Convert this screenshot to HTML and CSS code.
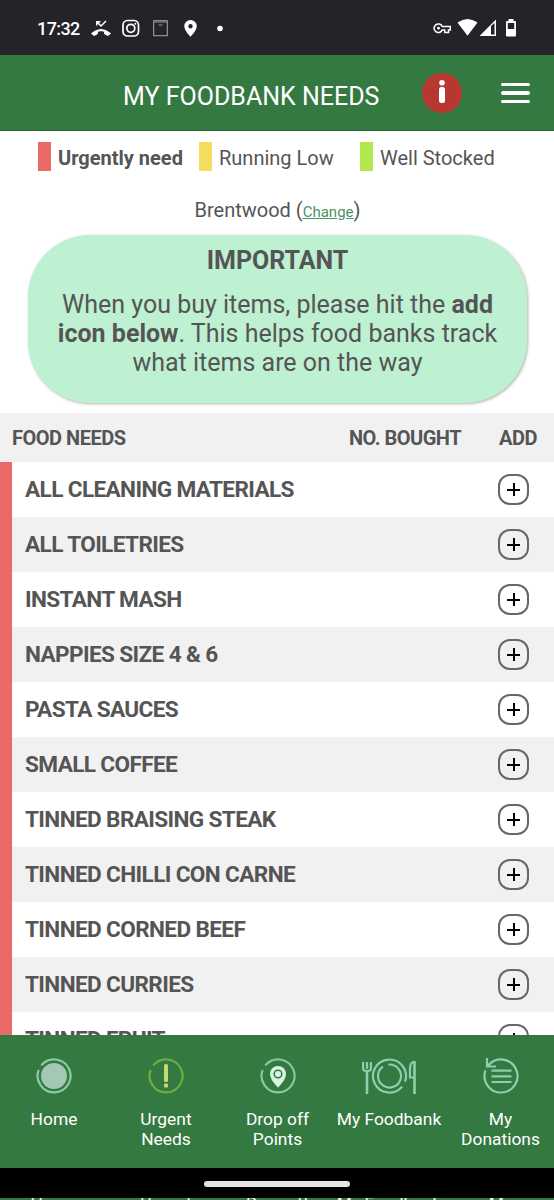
FILE: index.html
```
<!DOCTYPE html>
<html lang="en">
<head>
    <meta charset="UTF-8">
    <meta name="viewport" content="width=device-width, initial-scale=1.0">
    <title>My Foodbank Needs</title>
    <link rel="stylesheet" href="styles.css">
</head>
<body>
    <div class="screen">
        <div class="status-bar">
            <span class="clock">17:32</span>
            <svg class="status-left" width="140" height="24" viewBox="90 16 140 24" fill="none">
                <path d="M91.500 33.500Q101 25.500 110.500 33.500L107.800 35.500L104.600 33.800V31.300Q101 30 97.400 31.300V33.800L94.200 35.500Z" fill="#fff" stroke="#fff" stroke-linejoin="round"/>
                <path d="M96.800 25.500V21.800H100.500M97 22L101 26L106 21" stroke="#fff" stroke-width="1.500"/>
                <rect x="123" y="20.500" width="15.500" height="15.500" rx="4.500" stroke="#fff" stroke-width="1.700"/>
                <circle cx="130.800" cy="28.300" r="4" stroke="#fff" stroke-width="1.700"/>
                <circle cx="135.400" cy="23.800" r="1" fill="#fff"/>
                <rect x="153.700" y="20.700" width="13.600" height="15" stroke="#aaa"/>
                <path d="M154 22H167" stroke="#777" stroke-width="1.500"/>
                <path d="M158.500 25H162.500" stroke="#999"/>
                <path d="M190.500 20a6.200 6.200 0 0 0-6.200 6.200c0 4.400 6.200 10.500 6.200 10.500s6.200-6.100 6.200-10.500a6.200 6.200 0 0 0-6.200-6.200zm0 4a2.200 2.200 0 1 1 0 4.400a2.200 2.200 0 0 1 0-4.400z" fill="#fff" fill-rule="evenodd"/>
                <circle cx="220" cy="28.500" r="2.800" fill="#fff"/>
            </svg>
            <svg class="status-right" width="86" height="24" viewBox="432 16 86 24" fill="none">
                <path d="M442.300 26.600A4.300 4.300 0 1 0 442.300 29.900H444.800V32.400H448.500V29.900H450.300V26.600Z" stroke="#fff" stroke-width="1.500"/>
                <circle cx="438.500" cy="28.200" r="1.400" fill="#fff"/>
                <path d="M457.500 22.500Q467.500 15.500 477.500 22.500L467.500 35.800Z" fill="#fff"/>
                <path d="M479.500 36L496 19.500V36ZM491 26V34.500H494.500V23Z" fill="#fff" fill-rule="evenodd"/>
                <path d="M508.500 19H513.500V21H515Q516 21 516 22V35.500Q516 36.500 515 36.500H507Q506 36.500 506 35.500V22Q506 21 507 21H508.500ZM507.800 23V29H514.200V23Z" fill="#fff" fill-rule="evenodd"/>
            </svg>
        </div>

        <header class="app-header">
            <h1>MY FOODBANK NEEDS</h1>
            <svg class="info" width="40" height="40" viewBox="0 0 40 40">
                <circle cx="20" cy="20" r="20" fill="#b93731"/>
                <circle cx="20" cy="9.800" r="2.800" fill="#fff"/>
                <rect x="17" y="14" width="6" height="16" rx="2.500" fill="#fff"/>
            </svg>
            <div class="burger"><i></i><i></i><i></i></div>
        </header>

        <div class="legend">
            <div class="key urgent">Urgently need</div>
            <div class="key low">Running Low</div>
            <div class="key stocked">Well Stocked</div>
        </div>
        <p class="location">Brentwood (<a href="#">Change</a>)</p>

        <div class="notice">
            <h2>IMPORTANT</h2>
            <p>When you buy items, please hit the <b>add<br>icon below</b>. This helps food banks track<br>what items are on the way</p>
        </div>

        <div class="table-head">
            <span>FOOD NEEDS</span>
            <span class="bought">NO. BOUGHT</span>
            <span>ADD</span>
        </div>
        <ul class="needs">
            <li><span>ALL CLEANING MATERIALS</span><button class="add"></button></li>
            <li><span>ALL TOILETRIES</span><button class="add"></button></li>
            <li><span>INSTANT MASH</span><button class="add"></button></li>
            <li><span>NAPPIES SIZE 4 &amp; 6</span><button class="add"></button></li>
            <li><span>PASTA SAUCES</span><button class="add"></button></li>
            <li><span>SMALL COFFEE</span><button class="add"></button></li>
            <li><span>TINNED BRAISING STEAK</span><button class="add"></button></li>
            <li><span>TINNED CHILLI CON CARNE</span><button class="add"></button></li>
            <li><span>TINNED CORNED BEEF</span><button class="add"></button></li>
            <li><span>TINNED CURRIES</span><button class="add"></button></li>
            <li><span>TINNED FRUIT</span><button class="add"></button></li>
        </ul>

        <nav class="tabs">
            <a href="#">
                <svg width="36" height="36" viewBox="0 0 36 36" fill="none">
                    <path d="M5.300 7.400A16.500 16.500 0 1 1 2.700 11.820" stroke="#8acda3" stroke-width="2.200"/>
                    <circle cx="18" cy="18" r="13" fill="#a3c9b4"/>
                </svg>
                Home
            </a>
            <a href="#">
                <svg width="36" height="36" viewBox="0 0 36 36" fill="none">
                    <path d="M5.300 7.400A16.500 16.500 0 1 1 2.700 11.820" stroke="#70ad3e" stroke-width="2.200"/>
                    <rect x="16" y="6" width="4" height="18" rx="1.500" fill="#c6da70"/>
                    <circle cx="18" cy="27.500" r="2.200" fill="#c6da70"/>
                </svg>
                Urgent<br>Needs
            </a>
            <a href="#">
                <svg width="36" height="36" viewBox="0 0 36 36" fill="none">
                    <path d="M5.300 7.400A16.500 16.500 0 1 1 2.700 11.820" stroke="#8ac7a0" stroke-width="2.200"/>
                    <path d="M18 8a8 8 0 0 0-8 8c0 6 8 13.500 8 13.500s8-7.500 8-13.500a8 8 0 0 0-8-8z" fill="#d5f5de"/>
                    <circle cx="18" cy="16" r="3.800" stroke="#347941" stroke-width="1.500"/>
                </svg>
                Drop off<br>Points
            </a>
            <a href="#">
                <svg width="54" height="36" viewBox="0 0 54 36" fill="none" stroke="#91cdab" stroke-width="2.200">
                    <path d="M1.100 4V10Q1.100 13 4 13H6Q8.900 13 8.900 10V4M5 4V11"/>
                    <path d="M5 13V36" stroke-width="2.600"/>
                    <path d="M43 23.640A16.500 16.500 0 1 0 40.140 28.600"/>
                    <path d="M26.500 6.540A11.500 11.500 0 1 1 20.900 8.580"/>
                    <path d="M52.500 3V36" stroke-width="2.600"/>
                    <path d="M52 3.500Q48 5 48 10V19.500H52"/>
                </svg>
                My Foodbank
            </a>
            <a href="#">
                <svg width="36" height="36" viewBox="0 0 36 36" fill="none" stroke="#91cdab" stroke-width="2.200">
                    <path d="M2.500 12.360A16.500 16.500 0 1 0 5.740 6.960"/>
                    <path d="M4 0V8.500H13M4 8.500L7 5.500"/>
                    <path d="M8.500 12.700H28.500M8.500 18.300H28.500M8.500 24H28.500"/>
                </svg>
                My<br>Donations
            </a>
        </nav>

        <div class="gesture-bar"><i></i></div>
        <div class="tabs-peek">
            <span>Home</span><span>Urgent</span><span>Drop off</span><span>My Foodbank</span><span>My</span>
        </div>
    </div>
</body>
</html>
```
FILE: styles.css
```
* {
    box-sizing: border-box;
}
body {
    margin: 0;
    font-family: Roboto, sans-serif;
    color: #555;
    background: #fff;
}
h1, h2, p, ul {
    margin: 0;
    padding: 0;
}
.screen {
    width: 554px;
    height: 1200px;
    overflow: hidden;
    display: flex;
    flex-direction: column;
}
.screen > * {
    flex-shrink: 0;
}
.status-bar {
    height: 55px;
    background: #232329;
    color: #fff;
    display: flex;
    align-items: center;
    padding: 1px 36px 0 37px;
}
.clock {
    width: 53px;
    font-size: 18px;
    font-weight: 500;
    letter-spacing: -0.6px;
}
.status-right {
    margin-left: auto;
}
.app-header {
    height: 76px;
    background: #347941;
    border-bottom: 1px solid #2c6537;
    display: flex;
    align-items: center;
    padding: 0 24px 0 123px;
}
.app-header h1 {
    width: 299px;
    padding-top: 8px;
    color: #fff;
    font-size: 25px;
    font-weight: 400;
    white-space: nowrap;
}
.burger {
    margin-left: auto;
    width: 29px;
    display: flex;
    flex-direction: column;
    gap: 5px;
    padding-top: 1px;
}
.burger i {
    height: 3.5px;
    border-radius: 2px;
    background: #fff;
}
.legend {
    display: flex;
    height: 58px;
    padding: 11px 0 0 38px;
    font-size: 20px;
}
.key {
    height: 29px;
    line-height: 32px;
    padding-left: 7px;
    border-left: 13px solid #ea6a67;
    white-space: nowrap;
}
.urgent {
    width: 161px;
    font-weight: 700;
}
.low {
    width: 161px;
    border-color: #f5dc5c;
}
.stocked {
    border-color: #b1e94d;
}
.location {
    height: 46px;
    padding: 9px 0 0 1px;
    line-height: 25px;
    font-size: 20px;
    text-align: center;
}
.location a {
    color: #4c9166;
    font-size: 15px;
}
.notice {
    width: 499px;
    height: 168px;
    margin: 0 0 10px 28px;
    padding-top: 11px;
    border-radius: 62px;
    background: #bef0d2;
    box-shadow: 1px 1px 3px rgba(0,0,0,0.3);
    text-align: center;
    font-size: 25px;
}
.notice h2 {
    font-size: 25px;
    line-height: 30px;
    margin-bottom: 14px;
}
.notice p {
    line-height: 29px;
    white-space: nowrap;
}
.table-head {
    height: 49px;
    background: #f1f1f1;
    display: flex;
    align-items: center;
    padding: 0 17px 0 12px;
    font-size: 20px;
    font-weight: 700;
    letter-spacing: -0.5px;
}
.bought {
    margin-left: auto;
    margin-right: 38px;
}
.needs {
    list-style: none;
    height: 573px;
    overflow: hidden;
    border-left: 12px solid #ea6a67;
}
.needs li {
    height: 55px;
    display: flex;
    align-items: center;
    justify-content: space-between;
    padding: 0 25px 0 13px;
    font-size: 22.6px;
    font-weight: 700;
    letter-spacing: -0.63px;
}
.needs li:nth-child(even) {
    background: #f1f1f1;
}
.add {
    width: 31px;
    height: 31px;
    padding: 0;
    border: 2px solid #66676b;
    border-radius: 12px;
    background: linear-gradient(#000, #000) center / 13px 2px no-repeat,
                linear-gradient(#000, #000) center / 2px 13px no-repeat;
}
.tabs {
    height: 133px;
    background: #347941;
    display: grid;
    grid-template-columns: 108px 116px 107px 116px 107px;
    padding-top: 23px;
}
.tabs a {
    color: #fff;
    font-size: 17.4px;
    line-height: 20px;
    text-align: center;
    text-decoration: none;
    white-space: nowrap;
}
.tabs svg {
    display: block;
    margin: 0 auto 15px;
}
.gesture-bar {
    height: 30px;
    background: #000;
    display: flex;
    justify-content: center;
    padding-top: 13px;
}
.gesture-bar i {
    width: 146px;
    height: 6px;
    border-radius: 3px;
    background: #e5e5e5;
}
.tabs-peek {
    height: 2px;
    background: #347941;
    display: grid;
    grid-template-columns: 108px 116px 107px 116px 107px;
    overflow: hidden;
    color: #fff;
    font-size: 17.4px;
    line-height: 10px;
    text-align: center;
}
```
